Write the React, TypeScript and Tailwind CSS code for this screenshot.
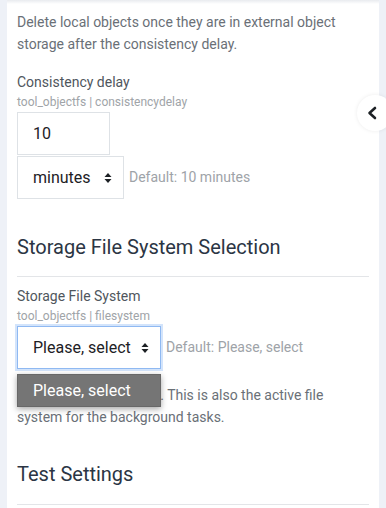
const font = { fontFamily: 'Roboto, "Liberation Sans", sans-serif' };

/* ── Select look-alike (native arrows drawn) ─────────── */
const UpDown = () => (
  <svg width="8" height="12" viewBox="0 0 8 12" className="shrink-0">
    <path d="M4 1 L7.5 5 H0.5 Z" fill="#1d2125" />
    <path d="M4 11 L7.5 7 H0.5 Z" fill="#1d2125" />
  </svg>
);

const FieldMeta = ({ label, name }: { label: string; name: string }) => (
  <div>
    <div className="text-[14px] leading-[22px] text-[#4f565d]">{label}</div>
    <div className="text-[12px] leading-[16px] text-[#a0a4a8] mt-[1px]">{name}</div>
  </div>
);

export default function App() {
  return (
    <div style={font} className="relative w-[386px] h-[508px] overflow-hidden bg-[#eef1f7] px-[7px]">
      {/* card */}
      <div className="relative bg-white h-full px-[10px] pt-[11px]">
        <div className="absolute inset-x-0 top-0 h-[4px] bg-gradient-to-b from-[#e9ebef] to-white" />
        <p className="relative text-[14px] leading-[22px] text-[#6a7077] pr-[20px]">
          Delete local objects once they are in external object storage after the consistency delay.
        </p>

        <div className="mt-[16px]">
          <FieldMeta label="Consistency delay" name="tool_objectfs | consistencydelay" />
          <div className="mt-[2px] w-[93px] h-[43px] border border-[#dee2e6] flex items-center px-[15px] text-[16px] text-[#1d2125]">
            10
          </div>
          <div className="mt-[1px] flex items-center gap-[5px]">
            <div className="w-[107px] h-[43px] border border-[#dee2e6] flex items-center justify-between pl-[15px] pr-[11px] text-[16px] text-[#1d2125]">
              <span>minutes</span>
              <UpDown />
            </div>
            <span className="text-[14px] text-[#9ea3a8]">Default: 10 minutes</span>
          </div>
        </div>

        <h3 className="mt-[34px] text-[20px] leading-[28px] font-normal text-[#2b3544]">
          Storage File System Selection
        </h3>
        <div className="mt-[15px] border-t border-[#e3e5e8]" />

        <div className="mt-[8px]">
          <FieldMeta label="Storage File System" name="tool_objectfs | filesystem" />
          <div className="relative mt-[2px] flex items-center gap-[5px]">
            <div className="w-[144px] h-[43px] border border-[#8fb9f2] shadow-[0_0_0_2px_#d3e4fb] flex items-center justify-between pl-[15px] pr-[11px] text-[16px] text-[#1d2125]">
              <span>Please, select</span>
              <UpDown />
            </div>
            <span className="text-[14px] text-[#9ea3a8]">Default: Please, select</span>

            {/* open dropdown list */}
            <div className="absolute left-0 top-[48px] z-10 w-[144px] h-[33px] bg-[#757575] border border-[#686868] shadow-[0_2px_6px_rgba(0,0,0,0.35)] flex items-center pl-[15px] text-[16px] text-white">
              Please, select
            </div>
          </div>
          <p className="mt-[15px] text-[14px] leading-[22px] text-[#6a7077] pr-[20px]">
            Select what file system. This is also the active file system for the background tasks.
          </p>
        </div>

        <h3 className="mt-[32px] text-[20px] leading-[28px] font-normal text-[#2b3544]">Test Settings</h3>
        <div className="mt-[16px] border-t border-[#e3e5e8]" />
      </div>

      {/* drawer toggle */}
      <div className="absolute left-[357px] top-[95px] w-[36px] h-[36px] rounded-full bg-white shadow-[0_0_4px_rgba(0,0,0,0.08)] flex items-center pl-[9px]">
        <svg width="12" height="14" viewBox="0 0 12 14">
          <path d="M9 2 L3.5 7 L9 12" fill="none" stroke="#1d2125" strokeWidth="2.6" strokeLinejoin="round" strokeLinecap="round" />
        </svg>
      </div>
    </div>
  );
}
